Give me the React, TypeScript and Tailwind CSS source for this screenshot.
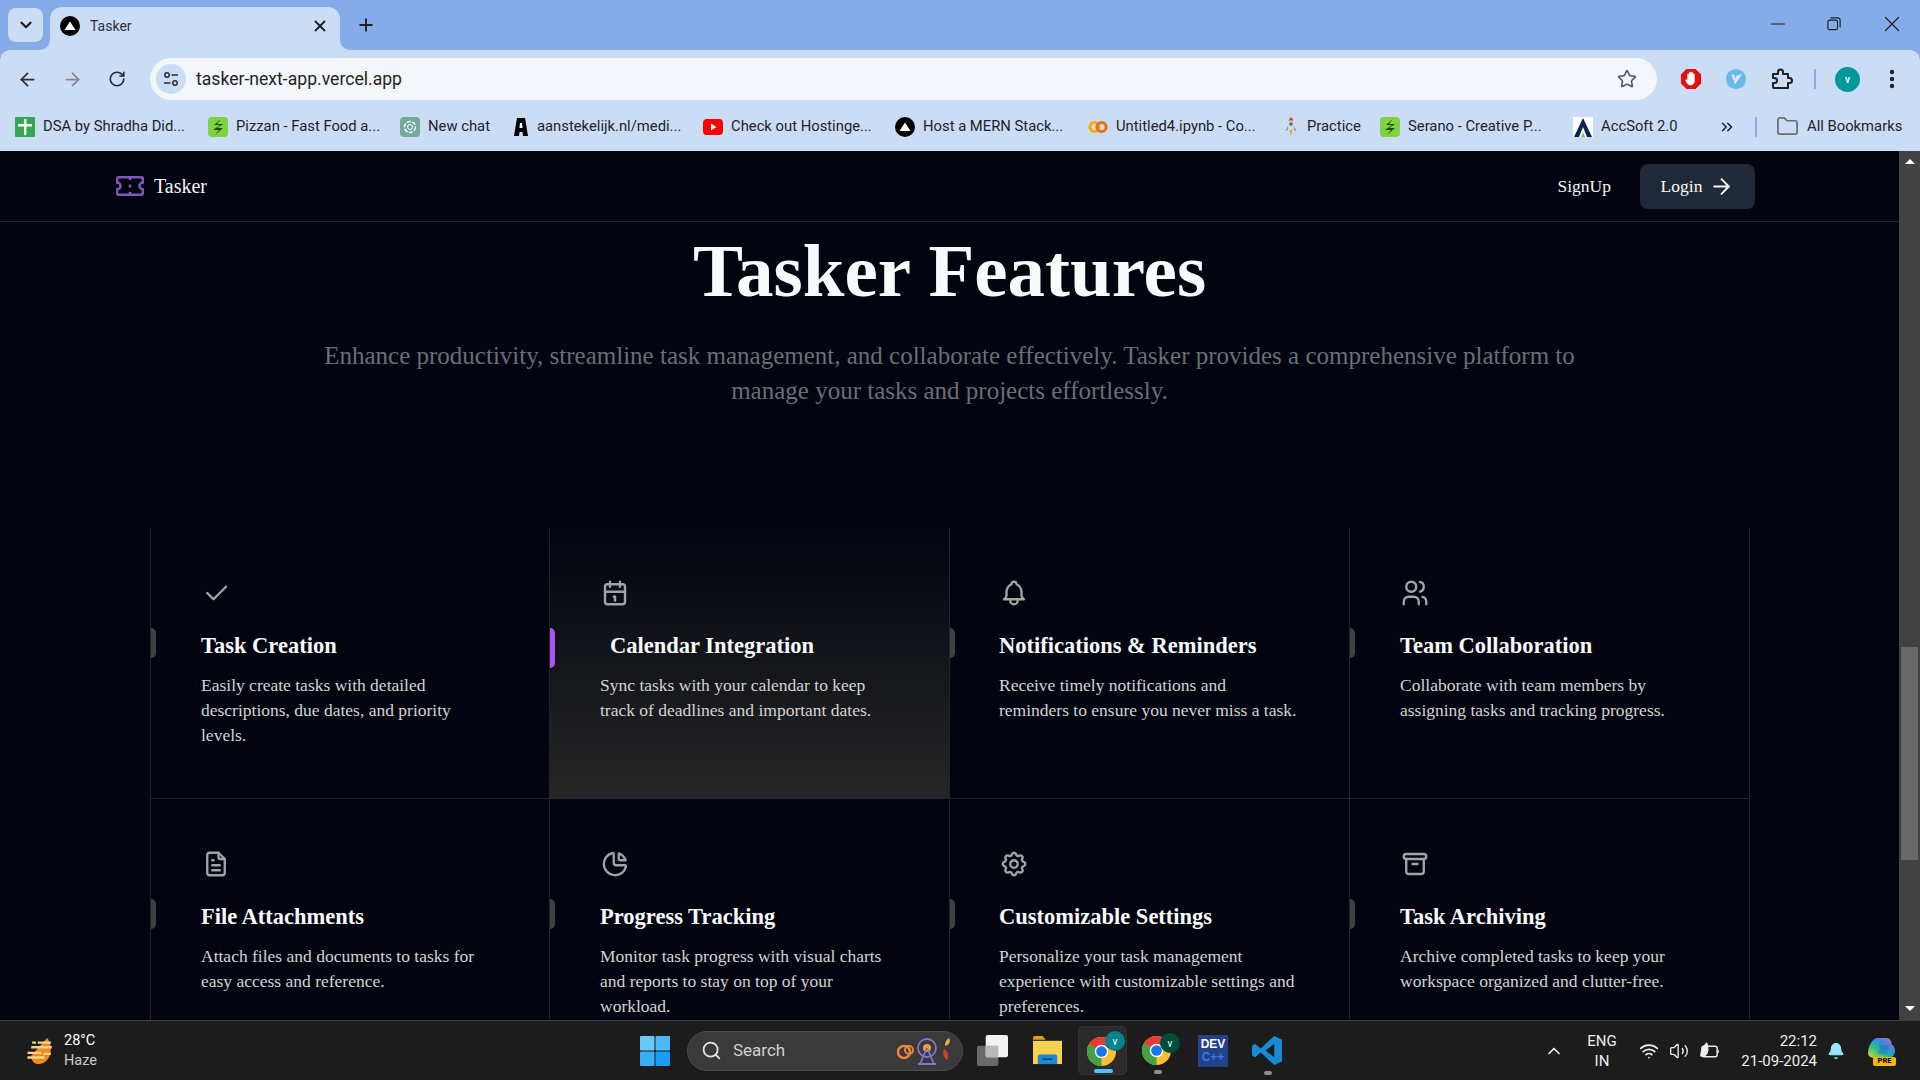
import React from "react";
import { ArrowLeft, ArrowRight, RotateCw, Star, Plus, X, ChevronDown, ChevronUp, Minus, EllipsisVertical, ChevronsRight, Folder, Search, Wifi, Volume2, Bell } from "lucide-react";
import { TbCheck, TbCalendar, TbBell, TbUsers, TbFileText, TbChartPie, TbSettings, TbArchive } from "react-icons/tb";

const UI = "font-['Roboto',sans-serif]";

function VercelDot({ cls }: { cls: string }) {
  return (
    <svg viewBox="0 0 20 20" className={cls}>
      <circle cx="10" cy="10" r="10" fill="#000" />
      <path d="M10 5.5 L15.5 14 H4.5 Z" fill="#fff" />
    </svg>
  );
}
function Zap() {
  return (
    <svg viewBox="0 0 20 20" className="w-5 h-5 shrink-0">
      <rect width="20" height="20" rx="4" fill="#7ed33f" />
      <path d="M13 2 L6 8 H12 L5 13 H11 L7 18 L15 11 H9 L15 7 H9 Z" fill="#1d4d1b" />
    </svg>
  );
}

const bookmarks: { icon: React.ReactNode; text: string; cls: string }[] = [
  {
    text: "DSA by Shradha Did...",
    cls: "w-[193px]",
    icon: (
      <svg viewBox="0 0 20 20" className="w-5 h-5 shrink-0">
        <rect width="20" height="20" rx="1" fill="#34a853" />
        <path d="M9 2h2.4v5H17v2.4h-5.6V18H9V9.4H3V7h6Z" fill="#fff" />
      </svg>
    ),
  },
  { text: "Pizzan - Fast Food a...", cls: "w-[192px]", icon: <Zap /> },
  {
    text: "New chat",
    cls: "w-[112px]",
    icon: (
      <svg viewBox="0 0 20 20" className="w-5 h-5 shrink-0">
        <rect width="20" height="20" rx="4" fill="#74aa9c" />
        <circle cx="10" cy="10" r="5.5" fill="none" stroke="#fff" strokeWidth="1.4" strokeDasharray="4 1.5" />
        <circle cx="10" cy="10" r="2.5" fill="none" stroke="#fff" strokeWidth="1" />
      </svg>
    ),
  },
  {
    text: "aanstekelijk.nl/medi...",
    cls: "w-[191px]",
    icon: (
      <svg viewBox="0 0 17 20" className="w-[17px] h-5 shrink-0">
        <path d="M5 1h8l3 18h-5l-.5-4h-3L7 19H2Z" fill="#000" />
        <path d="M8 6h2l.6 5H7.400Z" fill="#fff" />
      </svg>
    ),
  },
  {
    text: "Check out Hostinge...",
    cls: "w-[192px]",
    icon: (
      <svg viewBox="0 0 20 20" className="w-5 h-5 shrink-0">
        <rect y="2" width="20" height="16" rx="4" fill="#f00" />
        <path d="M8 6.5 L13.5 10 L8 13.5 Z" fill="#fff" />
      </svg>
    ),
  },
  { text: "Host a MERN Stack...", cls: "w-[193px]", icon: <VercelDot cls="w-5 h-5 shrink-0" /> },
  {
    text: "Untitled4.ipynb - Co...",
    cls: "w-[195px]",
    icon: (
      <svg viewBox="0 0 20 20" className="w-5 h-5 shrink-0">
        <circle cx="6.5" cy="10" r="4.6" fill="none" stroke="#f9ab00" strokeWidth="3" />
        <circle cx="13.5" cy="10" r="4.6" fill="none" stroke="#e8710a" strokeWidth="3" />
      </svg>
    ),
  },
  {
    text: "Practice",
    cls: "w-[97px]",
    icon: (
      <svg viewBox="3 0 14 20" className="w-[16px] h-5 shrink-0">
        <path d="M10 0c3 3 3.4 7 3 12H7C6.600 7 7 3 10 0Z" fill="#cfd8dc" />
        <path d="M10 0c1.200 1 2 2.200 2.500 3.500h-5C8 2.200 8.800 1 10 0Z" fill="#e53935" />
        <circle cx="10" cy="7" r="1.800" fill="#546e7a" />
        <path d="M7 9 L4.500 14 L7 13Z M13 9 L15.500 14 L13 13Z" fill="#78909c" />
        <path d="M8.500 13h3L10 19Z" fill="#ff9800" />
      </svg>
    ),
  },
  { text: "Serano - Creative P...", cls: "w-[193px]", icon: <Zap /> },
  {
    text: "AccSoft 2.0",
    cls: "w-[120px]",
    icon: (
      <svg viewBox="0 0 20 20" className="w-5 h-5 shrink-0">
        <rect width="20" height="20" fill="#fff" />
        <path d="M10 1 L19 20 H14 L10 10 L6 20 H1 Z" fill="#0b2355" />
        <path d="M10 15 L12 20 H8 Z" fill="#8bc34a" />
      </svg>
    ),
  },
];

function Bookmarks() {
  return (
    <div className="h-[51px] bg-[#cbdcf5] flex items-center pl-[15px] pt-[2px] text-[14.8px] text-[#1f1f2b]">
      {bookmarks.map((b) => (
        <div key={b.text} className={`flex items-center gap-2 shrink-0 whitespace-nowrap ${b.cls}`}>
          {b.icon}
          <span>{b.text}</span>
        </div>
      ))}
      <ChevronsRight className="w-[18px] h-[18px] ml-[25px] text-[#1f1f1f]" />
      <div className="w-0.5 h-5 bg-[#86ace9] ml-[19px]" />
      <Folder className="w-[23px] h-[23px] ml-[19px] text-[#6a6e75]" strokeWidth={1.8} />
      <span className="ml-2 whitespace-nowrap">All Bookmarks</span>
    </div>
  );
}

function ChromeBar() {
  return (
    <header className={`shrink-0 h-[151px] bg-[#85ace9] ${UI}`}>
      <div className="h-[50px] flex items-end relative">
        <div className="absolute left-[8px] top-[8px] w-[35px] h-[34px] rounded-lg bg-[#cbdcf5] flex items-center justify-center">
          <ChevronDown className="w-[18px] h-[18px] text-[#1f1f1f]" strokeWidth={3} />
        </div>
        <div className="relative ml-[50px] w-[290px] h-[43px] bg-[#cbdcf5] rounded-t-xl flex items-center pl-[10px] pr-[11px] pb-[5px]">
          <VercelDot cls="w-5 h-5 shrink-0" />
          <span className="ml-[10px] text-[14px] text-[#2c2f36]">Tasker</span>
          <X className="ml-auto w-[18px] h-[18px] text-[#1f1f1f]" strokeWidth={2.4} />
          <div className="absolute -right-[10px] bottom-0 w-[10px] h-[10px] bg-[#cbdcf5]">
            <div className="w-full h-full bg-[#85ace9] rounded-bl-[10px]" />
          </div>
          <div className="absolute -left-[10px] bottom-0 w-[10px] h-[10px] bg-[#cbdcf5]">
            <div className="w-full h-full bg-[#85ace9] rounded-br-[10px]" />
          </div>
        </div>
        <Plus className="ml-[16px] mb-[15px] w-[20px] h-[20px] text-[#1f1f1f]" strokeWidth={2.2} />
        <div className="ml-auto h-full flex items-center pb-[2px] pr-[15px] text-[#1f1f1f]">
          <Minus className="w-[22px] h-[22px] mr-[38px]" strokeWidth={1.3} />
          <svg viewBox="0 0 16 16" className="w-[14px] h-[14px] mr-[38px]" fill="none" stroke="#1f1f1f" strokeWidth="1.300">
            <rect x="1" y="3.500" width="11" height="11" rx="2" />
            <path d="M4 1h8.500a2.500 2.500 0 0 1 2.500 2.500V12" />
          </svg>
          <X className="w-[26px] h-[26px]" strokeWidth={1.1} />
        </div>
      </div>
      <div className="h-[50px] bg-[#cbdcf5] rounded-t-[10px] flex items-center pt-[8px]">
        <ArrowLeft className="ml-[17px] w-[21px] h-[21px] text-[#2a2d33]" strokeWidth={2} />
        <ArrowRight className="ml-[24px] w-[21px] h-[21px] text-[#84888f]" strokeWidth={2} />
        <RotateCw className="ml-[25px] w-[18px] h-[18px] text-[#2a2d33]" strokeWidth={2.2} />
        <div className="ml-[24px] w-[1507px] h-[42px] rounded-full bg-[#f3f6fb] flex items-center pl-[6px]">
          <div className="w-[30px] h-[30px] rounded-full bg-[#cbdcf5] flex items-center justify-center">
            <svg viewBox="0 0 16 16" className="w-4 h-4" fill="none" stroke="#2a2d33" strokeWidth="1.500">
              <circle cx="4" cy="4" r="2.200" />
              <path d="M8.500 4H15M1 12h6.500" />
              <circle cx="12" cy="12" r="2.200" />
            </svg>
          </div>
          <span className="ml-[10px] pt-[1px] text-[17.6px] text-[#1f1f1f]">tasker-next-app.vercel.app</span>
          <Star className="ml-auto mr-[20px] w-[20px] h-[20px] text-[#5a5d63]" strokeWidth={2} />
        </div>
        <div className="ml-[23px] flex items-center">
          <svg viewBox="0 0 24 24" className="w-[22px] h-[22px]">
            <path d="M7 1h10l6 6v10l-6 6H7l-6-6V7Z" fill="#e30f0f" />
            <path d="M8 12V7a1 1 0 0 1 2 0V5a1 1 0 0 1 2 0v0a1 1 0 0 1 2 0v2a1 1 0 0 1 2 0v7c0 3-2 5-4.500 5S7.500 17 6 14c-.5-1 1-2 2-1Z" fill="#fff" />
          </svg>
          <svg viewBox="0 0 24 24" className="ml-[23px] w-[22px] h-[22px]">
            <circle cx="12" cy="12" r="11" fill="#6bb8e8" />
            <path d="M7 7 L11 18 L19 6 L12 9 L11 12 L10 7 Z" fill="#d7ecfa" />
          </svg>
          <svg viewBox="0 0 22 22" className="ml-[24px] w-[22px] h-[22px]" fill="none" stroke="#1f1f1f" strokeWidth="2" strokeLinejoin="round">
            <path d="M2 6h5V4a2.500 2.500 0 0 1 5 0v2h5v4h1.500a2.500 2.500 0 0 1 0 5H17v5H3a1 1 0 0 1-1-1v-4h1.500a2.500 2.500 0 0 0 0-5H2Z" />
          </svg>
          <div className="ml-[21px] w-0.5 h-5 bg-[#86ace9]" />
          <div className="ml-[19px] w-[25px] h-[25px] rounded-full bg-[#00979d] flex items-center justify-center text-[10px] font-semibold text-white">v</div>
          <EllipsisVertical className="ml-[20px] w-[24px] h-[24px] text-[#1f1f1f]" strokeWidth={2.4} />
        </div>
      </div>
      <Bookmarks />
    </header>
  );
}

const features = [
  { Icon: TbCheck, title: "Task Creation", desc: "Easily create tasks with detailed descriptions, due dates, and priority levels." },
  { Icon: TbCalendar, title: "Calendar Integration", desc: "Sync tasks with your calendar to keep track of deadlines and important dates.", active: true },
  { Icon: TbBell, title: "Notifications & Reminders", desc: "Receive timely notifications and reminders to ensure you never miss a task." },
  { Icon: TbUsers, title: "Team Collaboration", desc: "Collaborate with team members by assigning tasks and tracking progress." },
  { Icon: TbFileText, title: "File Attachments", desc: "Attach files and documents to tasks for easy access and reference." },
  { Icon: TbChartPie, title: "Progress Tracking", desc: "Monitor task progress with visual charts and reports to stay on top of your workload." },
  { Icon: TbSettings, title: "Customizable Settings", desc: "Personalize your task management experience with customizable settings and preferences." },
  { Icon: TbArchive, title: "Task Archiving", desc: "Archive completed tasks to keep your workspace organized and clutter-free." },
];

const columnClasses = ["border-l pl-[50px]", "pl-[50px]", "pl-[49px]", "pl-[50px]"];

function Card({ f, i }: { f: (typeof features)[number]; i: number }) {
  const { Icon } = f;
  return (
    <div
      className={`relative h-[271px] py-[50px] border-r border-[#23242a] ${columnClasses[i % 4]} pr-[50px] ${i < 4 ? "border-b" : ""} ${
        f.active ? "bg-gradient-to-b from-transparent to-[#262626]" : ""
      }`}
    >
      <Icon className="w-[30px] h-[30px] text-[#a3a3a3]" strokeWidth={1.9} />
      <span className={`absolute left-0 top-[100px] w-[5px] rounded-r-full ${f.active ? "h-[40px] bg-[#a855f7]" : "h-[30px] bg-[#404040]"}`} />
      <div className="mt-5 h-[35px] text-[22.5px] leading-[35px] font-bold text-[#f8fafc]">
        <span className={f.active ? "inline-block translate-x-[10px]" : "inline-block"}>{f.title}</span>
      </div>
      <p className="mt-2.5 max-w-[300px] text-[17.5px] leading-[25px] text-[#d4d4d4]">{f.desc}</p>
    </div>
  );
}

function Page() {
  return (
    <div className="flex-1 min-h-0 flex overflow-hidden bg-[#02050f] font-['Liberation_Serif',serif]">
      <main className="flex-1 min-w-0 flex flex-col">
        <nav className="shrink-0 h-[71px] border-b border-[#23242e] flex items-center pl-[116px] pr-[144px]">
          <svg viewBox="0 0 28 20" className="w-7 h-5" fill="none" stroke="#8256c4" strokeWidth="2.500">
            <path d="M3 1.200h22a2 2 0 0 1 2 2v3.300a3.500 3.500 0 0 0 0 7v3.300a2 2 0 0 1-2 2H3a2 2 0 0 1-2-2v-3.300a3.500 3.500 0 0 0 0-7V3.200a2 2 0 0 1 2-2Z" />
            <path d="M14 1v3M14 8.500v3M14 16v3" />
          </svg>
          <span className="ml-[10px] text-[20px] text-[#f5f5f5]">Tasker</span>
          <span className="ml-auto text-[17.5px] font-medium text-[#f5f5f5]">SignUp</span>
          <div className="ml-[29px] h-[45px] w-[115px] rounded-lg bg-[#1f2937] flex items-center justify-center gap-[7px] text-[17.5px] font-medium text-[#f9fafb]">
            Login
            <ArrowRight className="w-[25px] h-[25px]" strokeWidth={1.8} />
          </div>
        </nav>
        <section className="pt-[11px] text-center">
          <h1 className="text-[75px] leading-[75px] font-bold text-[#f8fafc]">Tasker Features</h1>
          <p className="mx-auto mt-[30px] w-[1280px] text-[25px] leading-[35px] text-[#6b6e76]">
            Enhance productivity, streamline task management, and collaborate effectively. Tasker provides a comprehensive platform to manage your tasks and projects effortlessly.
          </p>
        </section>
        <div className="mx-[150px] mt-[120px] grid grid-cols-4 w-[1600px]">
          {features.map((f, i) => (
            <Card key={f.title} f={f} i={i} />
          ))}
        </div>
      </main>
      <aside className="shrink-0 w-[21px] bg-[#424242] flex flex-col items-center">
        <ChevronUpTri />
        <div className="mt-[483px] w-[17px] h-[213px] bg-[#686868]" />
        <div className="mt-auto mb-[9px] w-0 h-0 border-x-[5px] border-x-transparent border-t-[5px] border-t-white" />
      </aside>
    </div>
  );
}

function ChevronUpTri() {
  return <div className="mt-[8px] w-0 h-0 border-x-[5px] border-x-transparent border-b-[5px] border-b-white" />;
}

function ChromeLogo({ badge, cls }: { badge: string; cls: string }) {
  return (
    <div className={`relative shrink-0 ${cls}`}>
      <svg viewBox="0 0 32 32" className="w-[31px] h-[31px] mt-[3px]">
        <circle cx="15" cy="17" r="15" fill="#fbc02d" />
        <path d="M15 17 L2 9.500 A15 15 0 0 1 28 9.500 Z" fill="#e53935" />
        <path d="M15 17 L2 9.500 A15 15 0 0 0 15 32 Z" fill="#43a047" />
        <circle cx="15" cy="17" r="7" fill="#fff" />
        <circle cx="15" cy="17" r="5.500" fill="#1a73e8" />
      </svg>
      <div className={`absolute -right-[7px] -top-[1px] w-[20px] h-[20px] rounded-full flex items-center justify-center text-[10px] text-white ${badge}`}>v</div>
    </div>
  );
}

function Taskbar() {
  return (
    <footer className={`shrink-0 h-[60px] bg-[#1c1c1c] border-t border-[#3d3d3d] flex items-center relative text-white ${UI}`}>
      <svg viewBox="0 0 32 30" className="ml-[26px] w-[31px] h-[28px]">
        <path d="M22 1c7 8 5 26-8 28C8 29 5 26 5 20 Z" fill="#f08a1e" />
        <path d="M6 6h4M12 6h14M5 11h22M1 17h15M1 22h18M18 18h8" stroke="#f3d48a" strokeWidth="2.500" />
      </svg>
      <div className="ml-[7px] w-[42px] text-[14.5px] leading-[20px]">
        <div>28°C</div>
        <div className="text-[#c9c9c9]">Haze</div>
      </div>
      <svg viewBox="0 0 30 30" className="ml-[534px] w-[30px] h-[30px] shrink-0">
        <rect width="14.500" height="14.500" rx="1" fill="#69c8fa" />
        <rect x="15.500" width="14.500" height="14.500" rx="1" fill="#4cb8fa" />
        <rect y="15.500" width="14.500" height="14.500" rx="1" fill="#38aefa" />
        <rect x="15.500" y="15.500" width="14.500" height="14.500" rx="1" fill="#1a9dfa" />
      </svg>
      <div className="ml-[17px] w-[276px] h-[40px] rounded-full bg-[#3a3a3a] border border-[#4a4a4a] flex items-center pl-[13px] shrink-0">
        <Search className="w-[21px] h-[21px] text-[#e6e6e6]" strokeWidth={2} />
        <span className="ml-[11px] text-[17px] text-[#d0d0d0]">Search</span>
        <svg viewBox="0 0 58 28" className="ml-auto mr-[8px] w-[58px] h-[28px]">
          <circle cx="8" cy="15" r="6" fill="none" stroke="#e8843c" strokeWidth="2.500" />
          <circle cx="13" cy="13" r="4" fill="none" stroke="#e8843c" strokeWidth="2" />
          <circle cx="31" cy="11" r="9" fill="none" stroke="#8a6fd0" strokeWidth="1.800" />
          <circle cx="31" cy="11" r="4" fill="#e8a33c" />
          <path d="M31 11 L24 27 M31 11 L38 27 M22 27h18" stroke="#8a6fd0" strokeWidth="1.800" />
          <path d="M53 1c2 4 0 7-4 8 0-4 1-6 4-8Z" fill="#e8b33c" />
          <path d="M48 12c4 2 5 7 3 11-3-2-5-7-3-11Z" fill="#c8452c" />
        </svg>
      </div>
      <svg viewBox="0 0 32 32" className="ml-[14px] w-[31px] h-[31px] shrink-0">
        <rect x="0" y="11" width="22" height="21" rx="2" fill="#6a6a6a" />
        <rect x="9" y="0" width="23" height="23" rx="2" fill="#f2f2f2" />
        <rect x="9" y="11" width="13" height="12" fill="#b8b8b8" />
      </svg>
      <svg viewBox="0 0 32 32" className="ml-[24px] w-[31px] h-[31px] shrink-0">
        <path d="M1 3a2 2 0 0 1 2-2h8l3 4H1Z" fill="#d9a21b" />
        <path d="M1 6h30v24H1Z" fill="#f7d154" />
        <path d="M8 20h16a2 2 0 0 1 2 2v8H6v-8a2 2 0 0 1 2-2Z" fill="#1e88d6" />
        <path d="M11 25h10" stroke="#0b3d66" strokeWidth="1.500" />
      </svg>
      <div className="ml-[15px] w-[49px] h-[49px] rounded-[5px] bg-[#2b2b2b] border border-[#333] flex items-start pl-[8px] pt-[5px] relative shrink-0">
        <ChromeLogo cls="w-[31px] h-[34px]" badge="bg-[#00838f]" />
        <div className="absolute left-[15px] bottom-[1px] w-[19px] h-[4px] rounded-full bg-[#4fc3f7]" />
      </div>
      <div className="ml-[15px] relative shrink-0 w-[31px] h-[49px] pt-[5px]">
        <ChromeLogo cls="w-[31px] h-[34px]" badge="bg-[#004d40]" />
        <div className="absolute left-[12px] bottom-[1px] w-[8px] h-[4px] rounded-full bg-[#8f8f8f]" />
      </div>
      <div className="ml-[25px] relative shrink-0 w-[30px] h-[32px] bg-[#27408b] flex flex-col items-center justify-center font-['Liberation_Sans',sans-serif] font-bold leading-[13px]">
        <span className="text-[12px] text-white">DEV</span>
        <span className="text-[12px] text-[#2f7bf0]">C++</span>
      </div>
      <div className="ml-[24px] relative shrink-0 w-[31px] h-[49px] flex items-center">
        <svg viewBox="0 0 32 32" className="w-[31px] h-[31px]">
          <path d="M23 1 L31 5 V27 L23 31 L9 18 L3 23 L0 21 V11 L3 9 L9 14 Z M23 9 L14 16 L23 23 Z" fill="#1a8ad4" />
        </svg>
        <div className="absolute left-[12px] bottom-[0px] w-[8px] h-[4px] rounded-full bg-[#8f8f8f]" />
      </div>
      <ChevronUp className="ml-[261px] w-[20px] h-[20px] text-[#eeeeee] shrink-0" strokeWidth={2} />
      <div className="ml-[20px] w-[36px] text-center text-[15px] leading-[20px] shrink-0 text-[#eeeeee]">
        <div>ENG</div>
        <div>IN</div>
      </div>
      <Wifi className="ml-[19px] w-[20px] h-[20px] text-[#eeeeee] shrink-0" strokeWidth={2} />
      <Volume2 className="ml-[10px] w-[20px] h-[20px] text-[#eeeeee] shrink-0" strokeWidth={1.6} />
      <svg viewBox="0 0 22 18" className="ml-[10px] w-[21px] h-[18px] shrink-0" fill="none" stroke="#eeeeee" strokeWidth="1.500">
        <rect x="3" y="4" width="16" height="11" rx="2" />
        <path d="M20 8v3" />
        <path d="M2 14c0-7 4-11 6-13 2 4 2 10-2 13Z" fill="#eeeeee" />
      </svg>
      <div className="ml-[11px] w-[86px] text-right text-[15px] leading-[20px] shrink-0 text-[#eeeeee] whitespace-nowrap">
        <div>22:12</div>
        <div>21-09-2024</div>
      </div>
      <Bell className="ml-[10px] w-[18px] h-[20px] text-[#99e6ff] fill-[#99e6ff] shrink-0" strokeWidth={1.5} />
      <div className="ml-[22px] relative w-[30px] h-[28px] shrink-0">
        <svg viewBox="0 0 30 28" className="w-full h-full">
          <defs>
            <linearGradient id="cp" x1="0" y1="1" x2="1" y2="0">
              <stop offset="0" stopColor="#e8d33c" />
              <stop offset="0.35" stopColor="#35c27a" />
              <stop offset="0.6" stopColor="#2a8fe0" />
              <stop offset="1" stopColor="#e060c0" />
            </linearGradient>
          </defs>
          <path d="M10 1h9c4 0 5 3 6 6h-2c3 0 5 3 5 7 0 4-3 7-6 7H8c-4 0-7-2-7-5 0-5 4-15 9-15Z" fill="url(#cp)" />
          <path d="M13 8h9l-2 9h-9Z" fill="#1f6fd0" opacity="0.5" />
        </svg>
        <div className="absolute left-[6px] -bottom-[1px] w-[23px] h-[9px] rounded-[2px] bg-[#f5b800] flex items-center justify-center text-[7.500px] font-bold leading-none text-black">PRE</div>
      </div>
    </footer>
  );
}

export default function App() {
  return (
    <div className="w-[1920px] h-[1080px] flex flex-col overflow-hidden">
      <ChromeBar />
      <Page />
      <Taskbar />
    </div>
  );
}
